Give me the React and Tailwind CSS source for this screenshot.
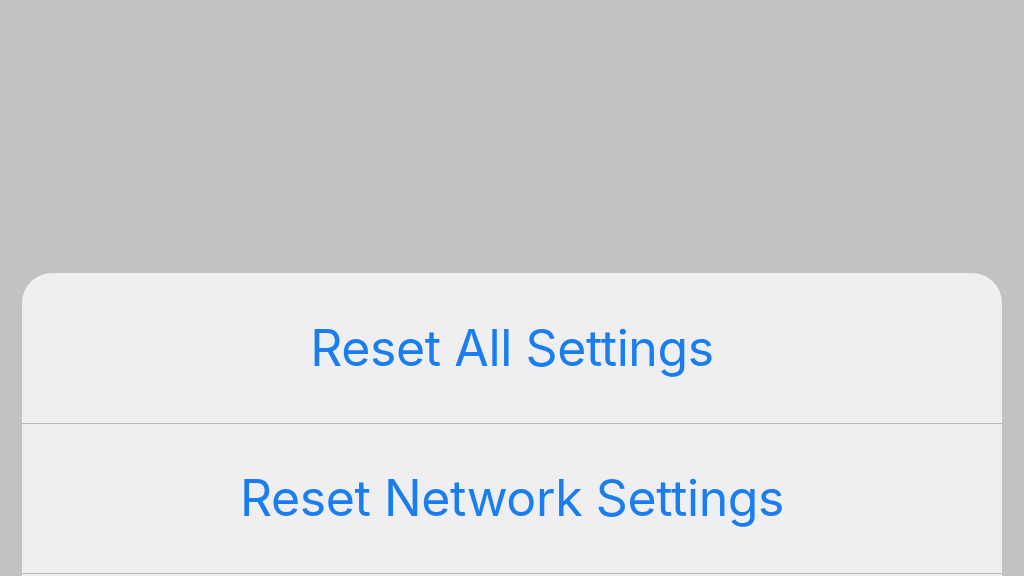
export default function App() {
  const items = ['Reset All Settings', 'Reset Network Settings'];

  return (
    <div className="flex h-[576px] w-[1024px] flex-col overflow-hidden bg-[#c2c2c4] font-['Inter',sans-serif]">
      <div className="h-[273px] shrink-0" />
      <div className="mx-[22px] flex flex-col rounded-t-[30px] bg-[#efeff1]">
        {items.map((label, i) => (
          <div
            key={label}
            className={`flex h-[150px] shrink-0 items-center justify-center text-[50px] tracking-[-0.4px] text-[#1a7ef0] ${i > 0 ? 'border-t border-[#b9b9bc]' : ''}`}
          >
            {label}
          </div>
        ))}
        {/* next row, below the fold */}
        <div className="h-[150px] shrink-0 border-t border-[#b9b9bc]" />
      </div>
    </div>
  );
}
